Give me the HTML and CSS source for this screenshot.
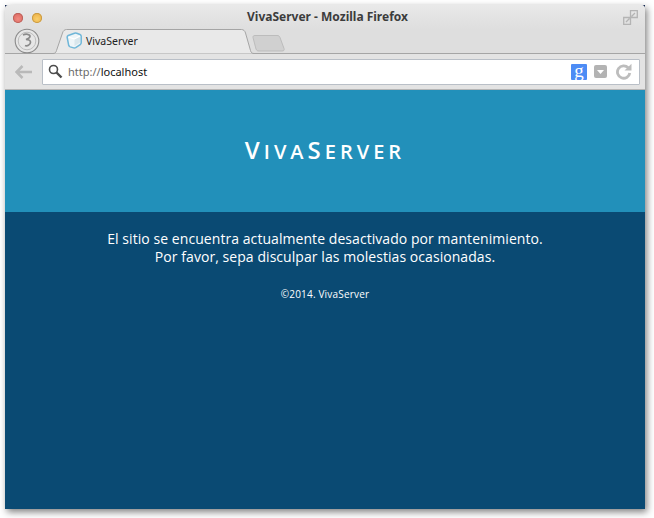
FILE: index.html
```html
<!DOCTYPE html>
<html lang="es">
<head>
<meta charset="utf-8">
<title>VivaServer</title>
<link rel="stylesheet" href="styles.css">
</head>
<body>
<div class="window">
  <div class="chrome">
    <div class="titlebar">
      <div class="lights"><span class="light red"></span><span class="light amber"></span></div>
      <div class="wintitle">VivaServer - Mozilla Firefox</div>
      <svg class="expand" width="15" height="15" viewBox="0 0 15 15" fill="none" stroke="#b4b4b4" stroke-width="1.3"><path d="M.7 7.5v6.800h6.800V7.500zM7.500.7h6.800v6.800H7.500zM3 12l3.500-3.500M12 3 8.500 6.500"/></svg>
    </div>
    <div class="tabrow">
      <svg class="ffbtn" width="26" height="26" viewBox="0 0 26 26" fill="none" stroke="#8a8a8a"><circle cx="13" cy="13" r="11.800" fill="#e6e6e6" stroke-width="1.100"/><circle cx="13" cy="13" r="8.800" stroke="#bdbdbd"/><path d="M9 7c3-1.500 7-.8 7 1.300 0 1.700-2.500 2.700-4 3.200 2 0 4.500.5 4.500 2.700 0 2.800-3.500 4.300-5.500 3.300" stroke-width="1.700"/></svg>
      <svg class="tabshape" width="212" height="25" viewBox="0 0 212 25"><path d="M0 24.500h3c2 0 3-1 3.500-3L12.500 4c.5-2 2-3.500 4-3.500h175c2 0 3.500 1.500 4 3.500l5 17.500c.5 2 1.500 3 3.500 3h8" fill="#e9e9e9" stroke="#a5a5a5"/></svg>
      <div class="tab">
        <svg width="16" height="17" viewBox="0 0 16 17"><path d="M1.200 5.500c-.2-1 .2-1.600 1-2L8.500 1.200c.8-.3 1.400-.3 2.200 0l3.300 1.300c.8.3 1.200.9 1.200 1.800v6.500c0 .8-.4 1.400-1 1.800l-4.500 3c-.7.4-1.300.5-2 .3l-3.500-1c-.9-.3-1.300-.8-1.500-1.600z" fill="#eef5f8" stroke="#6fb6d8" stroke-width="1.500"/><path d="M2.500 5 8.500 7l5.500-3" fill="none" stroke="#fff" stroke-width="1.200"/><path d="M8.500 7.500V14l5.500-3.500V5z" fill="#d8e6ec"/></svg>
        <span class="tabtext">VivaServer</span>
      </div>
      <svg class="newtab" width="33" height="18" viewBox="0 0 33 18"><path d="M3 1.500h22c1.500 0 2.500.5 3 2l4 11c.5 1.500 0 2.500-2 2.500H7c-1.500 0-2.500-.5-3-2L1 3.500c-.5-1 .5-2 2-2z" fill="#d0d0d0" stroke="#bcbcbc"/></svg>
    </div>
    <div class="toolbar">
      <svg class="back" width="18" height="14" viewBox="0 0 18 14"><path d="M7.500 1 1.500 7l6 6M2 7h15" fill="none" stroke="#b9b9b9" stroke-width="2.600"/></svg>
      <div class="urlbar">
        <svg class="lens" width="15" height="15" viewBox="0 0 15 15" fill="none" stroke="#4c4c4c"><circle cx="5.500" cy="5.500" r="4" stroke-width="1.600"/><path d="M8.500 8.500l5 5" stroke-width="2.400"/></svg>
        <span class="url"><span class="proto">http://</span>localhost</span>
        <span class="gbtn">g</span>
        <span class="drop"><svg width="7" height="4" viewBox="0 0 7 4"><path d="M0 0h7L3.500 4z" fill="#fff"/></svg></span>
        <svg class="reload" width="17" height="17" viewBox="0 0 17 17" fill="none"><path d="M13.200 4.800A6.200 6.200 0 1 0 14.800 10" stroke="#bdbdbd" stroke-width="2.800"/><path d="M9.500 7.500h7V.7z" fill="#bdbdbd"/></svg>
      </div>
    </div>
  </div>
  <header class="hero">
    <h1 class="logo">V<small>IVA</small>S<small>ERVER</small></h1>
  </header>
  <main class="content">
    <p class="msg">El sitio se encuentra actualmente desactivado por mantenimiento.<br>Por favor, sepa disculpar las molestias ocasionadas.</p>
    <p class="copy">©2014. VivaServer</p>
  </main>
</div>
</body>
</html>
```
FILE: styles.css
```css
html, body { margin: 0; padding: 0; background: #fff; }
body { width: 654px; height: 518px; overflow: hidden; }
.window {
  position: relative;
  margin: 5px 0 0 5px;
  width: 640px;
  height: 504px;
  display: flex;
  flex-direction: column;
  background: #12264f;
  box-shadow: 2px 3px 7px rgba(0,0,0,.5);
}
.chrome {
  height: 85px;
  display: flex;
  flex-direction: column;
  background: #dedede;
  border-radius: 4px 4px 0 0;
  font-family: "Noto Sans", sans-serif;
}
.titlebar {
  height: 24px;
  display: flex;
  align-items: center;
  position: relative;
  background: linear-gradient(#e9e9e9, #dedede);
  border-radius: 4px 4px 0 0;
}
.lights { display: flex; gap: 9px; margin: 2px 0 0 8px; }
.light { width: 10px; height: 10px; border-radius: 50%; }
.red { background: radial-gradient(circle at 50% 60%, #f08a80, #d9605a); box-shadow: inset 0 0 0 1px #b9635c; }
.amber { background: radial-gradient(circle at 50% 60%, #f9cf6c, #eaa83a); box-shadow: inset 0 0 0 1px #c79a45; }
.wintitle {
  position: absolute;
  left: 242px;
  top: 3px;
  font-size: 12px;
  line-height: 17px;
  font-weight: 700;
  color: #3c3c3c;
  white-space: nowrap;
}
.expand { position: absolute; right: 7px; top: 5px; }
.tabrow {
  position: relative;
  height: 25px;
  border-bottom: 1px solid #a5a5a5;
  box-sizing: border-box;
  flex: none;
}
.ffbtn { position: absolute; left: 9px; top: -1px; }
.tabshape { position: absolute; left: 45px; top: 0; }
.tab {
  position: absolute;
  left: 61px;
  top: 3px;
  display: flex;
  align-items: center;
  gap: 4px;
  height: 17px;
}
.tabtext { font-size: 10.500px; color: #222; }
.newtab { position: absolute; left: 247px; top: 5px; }
.toolbar {
  flex: 1;
  display: flex;
  align-items: center;
  background: #e3e3e3;
  padding: 0 5px 0 10px;
  border-bottom: 1px solid #b5b5b5;
  gap: 9px;
}
.back { flex: none; }
.urlbar {
  flex: 1;
  height: 24px;
  background: #fff;
  border: 1px solid #b9bfc7;
  border-radius: 1px;
  display: flex;
  align-items: center;
  padding: 0 7px 0 5px;
}
.lens { flex: none; }
.url { margin-left: 5px; font-size: 11px; color: #111; flex: 1; }
.proto { color: #6a6a6a; }
.gbtn {
  width: 16px;
  height: 16px;
  background: #4d8cf5;
  border-radius: 1px;
  color: #fff;
  font: 400 19px/13px "Liberation Serif", serif;
  text-align: center;
}
.drop {
  margin-left: 7px;
  width: 13px;
  height: 13px;
  background: #b3b3b3;
  border-radius: 2px;
  display: flex;
  align-items: center;
  justify-content: center;
}
.reload { margin-left: 8px; }
.hero {
  height: 122px;
  flex: none;
  background: #2290ba;
  display: flex;
  justify-content: center;
  align-items: flex-start;
}
.logo {
  margin: 46px 0 0;
  font-family: "Open Sans", sans-serif;
  font-weight: 600;
  font-size: 24px;
  line-height: 28px;
  letter-spacing: 4px;
  color: #fff;
}
.logo small { font-size: 20px; }
.content {
  flex: 1;
  background: #0a4a73;
  color: #fff;
  text-align: center;
  font-family: "Open Sans", sans-serif;
}
.msg { margin: 18px 0 0; font-size: 14px; line-height: 18px; letter-spacing: .06px; }
.copy { margin: 22px 0 0; font-size: 10px; line-height: 13px; letter-spacing: .18px; }
```
